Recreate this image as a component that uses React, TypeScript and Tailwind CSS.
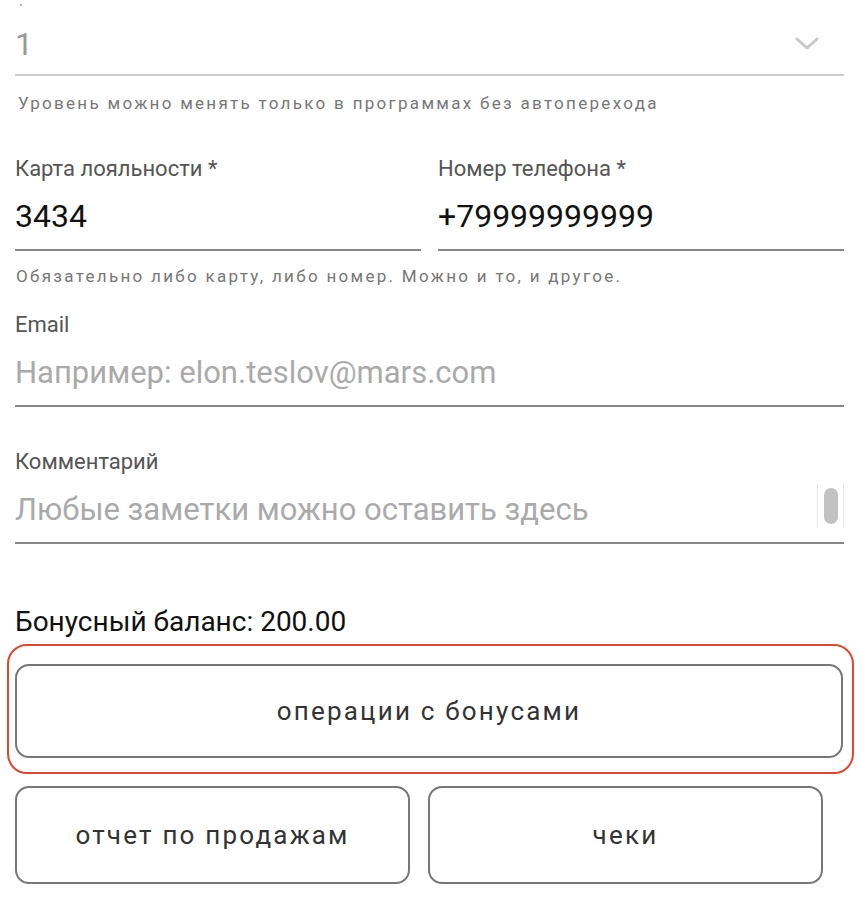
import React from "react";

const font = { fontFamily: "Roboto, 'Noto Sans', sans-serif" };

const Label: React.FC<{ children: React.ReactNode }> = ({ children }) => (
  <div className="text-[22px] leading-[24px] text-[#555]">{children}</div>
);

const Hint: React.FC<{ children: React.ReactNode }> = ({ children }) => (
  <div className="text-[17px] leading-[20px] tracking-[2.3px] text-[#777]">{children}</div>
);

const OutlineButton: React.FC<{ label: string; className?: string }> = ({ label, className }) => (
  <button
    className={
      "flex items-center justify-center rounded-[14px] border-2 border-[#777] bg-white text-[26px] tracking-[2.2px] text-[#333] " +
      (className ?? "")
    }
  >
    {label}
  </button>
);

const Field: React.FC<{ label: string; value: string; muted?: boolean; className?: string; children?: React.ReactNode }> = ({
  label,
  value,
  muted,
  className,
  children,
}) => (
  <div className={"relative border-b-2 border-[#888] " + (className ?? "")}>
    <Label>{label}</Label>
    <div
      className={
        muted
          ? "mt-[16px] h-[52px] text-[31px] leading-[40px] text-[#aaa]"
          : "mt-[15px] h-[53px] text-[32px] leading-[40px] text-[#111]"
      }
    >
      {value}
    </div>
    {children}
  </div>
);

export default function App() {
  return (
    <div className="min-h-[918px] w-[862px] bg-white pl-[15px] pr-[18px]" style={font}>
      {/* обрезанная подпись сверху */}
      <div className="h-[14px] pl-[5px] pt-[4px]">
        <div className="h-[2px] w-[2px] rounded-full bg-[#999]" />
      </div>

      {/* уровень */}
      <div className="flex h-[62px] items-center justify-between border-b-2 border-[#cdcdcd] pr-[25px]">
        <span className="text-[32px] text-[#999]">1</span>
        <svg width="24" height="14" viewBox="0 0 24 14" fill="none">
          <path d="M2 2l10 9 10-9" stroke="#c8c8c8" strokeWidth="3" strokeLinecap="round" strokeLinejoin="round" />
        </svg>
      </div>
      <div className="mt-[17px] pl-[3px]">
        <Hint>Уровень можно менять только в программах без автоперехода</Hint>
      </div>

      {/* карта + телефон */}
      <div className="mt-[44px] grid grid-cols-2 gap-[17px]">
        <Field label="Карта лояльности *" value="3434" />
        <Field label="Номер телефона *" value="+79999999999" />
      </div>
      <div className="mt-[15px] pl-[1px]">
        <Hint>Обязательно либо карту, либо номер. Можно и то, и другое.</Hint>
      </div>

      {/* email */}
      <Field label="Email" value="Например: elon.teslov@mars.com" muted className="mt-[27px]" />

      {/* комментарий */}
      <Field label="Комментарий" value="Любые заметки можно оставить здесь" muted className="mt-[43px]">
        <div className="absolute right-[0px] top-[34px] flex h-[44px] w-[27px] justify-center border-x border-[#e6e6e6]">
          <div className="mt-[4px] h-[36px] w-[14px] rounded-full bg-[#c2c2c2]" />
        </div>
      </Field>

      {/* бонусы */}
      <div className="mt-[62px] text-[28px] leading-[32px] text-[#111]">Бонусный баланс: 200.00</div>

      <div className="ml-[-8px] mr-[-10px] mt-[6px] rounded-[20px] border-2 border-[#e3452f] pb-[14px] pl-[6px] pr-[9px] pt-[18px]">
        <OutlineButton label="операции с бонусами" className="h-[94px] w-full" />
      </div>

      <div className="mt-[12px] flex gap-[18px]">
        <OutlineButton label="отчет по продажам" className="h-[98px] w-[395px]" />
        <OutlineButton label="чеки" className="h-[98px] w-[395px]" />
      </div>
    </div>
  );
}
